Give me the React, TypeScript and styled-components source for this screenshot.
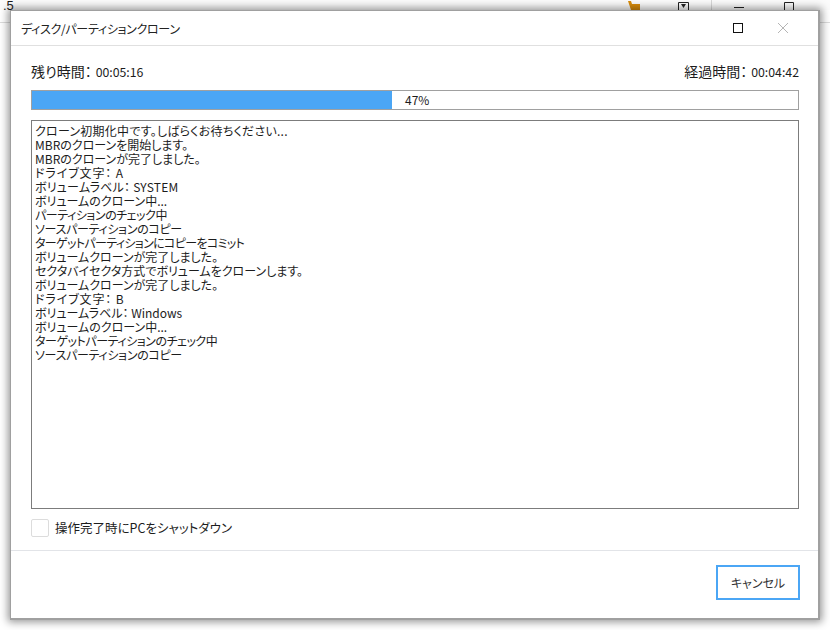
import React from "react";
import styled, { createGlobalStyle } from "styled-components";

const GlobalStyle = createGlobalStyle`
  html, body {
    margin: 0;
    padding: 0;
    background: #ffffff;
  }
  body {
    width: 830px;
    height: 630px;
    overflow: hidden;
    font-family: "Noto Sans CJK JP", "Liberation Sans", sans-serif;
    font-feature-settings: "palt";
    color: #1c1c1c;
  }
`;

const Page = styled.div`
  position: relative;
  width: 830px;
  height: 630px;
  display: flex;
  flex-direction: column;

  /* rule of the app behind the dialog, only its ends show */
  &::before {
    content: "";
    position: absolute;
    left: 0;
    right: 0;
    top: 22px;
    height: 1px;
    background: #dcdcdc;
  }
`;

const BackStrip = styled.div`
  position: relative;
  width: 830px;
  height: 10px;
  flex: none;
  display: flex;
  align-items: flex-start;
  overflow: hidden;
  background: #fbfbfb;

  &::after {
    content: "";
    position: absolute;
    left: 711px;
    top: 0;
    bottom: 0;
    width: 1px;
    background: #d8d8d8;
  }
`;

const BackVersion = styled.span`
  font-family: "Liberation Sans", sans-serif;
  font-size: 13px;
  line-height: 11px;
  margin-left: 3px;
  width: 622px;
  flex: none;
`;

const BackIcon = styled.svg<{ $gap: number }>`
  flex: none;
  margin-left: ${(p) => p.$gap}px;
`;

const Window = styled.div`
  position: relative;
  width: 810px;
  height: 610px;
  margin-left: 10px;
  flex: none;
  box-sizing: border-box;
  background: #ffffff;
  border: 1px solid #a0a0a0;
  border-width: 1px 2px 2px 1px;
  box-shadow: 0 0 8px 2px rgba(0, 0, 0, 0.42);
  display: flex;
  flex-direction: column;
`;

const TitleBar = styled.div`
  height: 34px;
  flex: none;
  display: flex;
  align-items: center;
  padding: 0 29px 0 10px;
  border-bottom: 1px solid #e0e0e0;
`;

const Title = styled.div`
  flex: 1;
  font-size: 12px;
  letter-spacing: -0.3px;
  color: #222222;
`;

const WindowButton = styled.button<{ $gap?: number }>`
  width: 12px;
  height: 12px;
  padding: 0;
  border: none;
  background: none;
  margin-left: ${(p) => p.$gap ?? 0}px;
  display: flex;
`;

const Body = styled.div`
  flex: 1;
  display: flex;
  flex-direction: column;
  padding: 18px 19px 0 20px;
  min-height: 0;
`;

const TimeRow = styled.div`
  display: flex;
  justify-content: space-between;
  font-size: 14px;
  line-height: 15px;
  height: 18px;
`;

const TimeValue = styled.span`
  font-size: 12.3px;
  margin-left: 4px;
`;

const Progress = styled.div`
  position: relative;
  height: 20px;
  margin-top: 8px;
  box-sizing: border-box;
  border: 1px solid #a0a0a0;
  background: #ffffff;
  flex: none;
`;

const ProgressFill = styled.div`
  height: 100%;
  background: #4ba6f5;
`;

const ProgressLabel = styled.span`
  position: absolute;
  left: 373px;
  top: 0;
  font-size: 12px;
  line-height: 17px;
`;

const LogBox = styled.div`
  height: 389px;
  flex: none;
  margin-top: 10px;
  box-sizing: border-box;
  border: 1px solid #7c7c7c;
  padding: 3px 3px;
  font-size: 12px;
  line-height: 14px;
  overflow: hidden;
`;

const LogLine = styled.div<{ $spacing?: number }>`
  white-space: nowrap;
  letter-spacing: ${(p) => p.$spacing ?? 0}px;
`;

const ShutdownRow = styled.label`
  display: flex;
  align-items: center;
  gap: 6px;
  margin-top: 10px;
  font-size: 12.5px;
  line-height: 18px;
`;

const CheckBox = styled.span`
  width: 18px;
  height: 18px;
  box-sizing: border-box;
  border: 1px solid #dcdcdc;
  border-radius: 2px;
  background: #fff;
`;

const Footer = styled.div`
  height: 68px;
  flex: none;
  box-sizing: border-box;
  border-top: 1px solid #e2e4e8;
  display: flex;
  justify-content: flex-end;
  align-items: flex-start;
  padding: 14px 18px 0 0;
`;

const CancelButton = styled.button`
  width: 84px;
  height: 35px;
  box-sizing: border-box;
  border: 2px solid #4ba6f5;
  background: #ffffff;
  font-family: inherit;
  font-feature-settings: inherit;
  font-size: 12px;
  color: #333333;
  padding: 0;
`;

const logLines: { text: string; spacing?: number }[] = [
  { text: "クローン初期化中です。しばらくお待ちください...", spacing: 0.25 },
  { text: "MBRのクローンを開始します。" },
  { text: "MBRのクローンが完了しました。" },
  { text: "ドライブ文字： A", spacing: 0.9 },
  { text: "ボリュームラベル： SYSTEM", spacing: 0.2 },
  { text: "ボリュームのクローン中..." },
  { text: "パーティションのチェック中", spacing: -0.45 },
  { text: "ソースパーティションのコピー", spacing: -0.3 },
  { text: "ターゲットパーティションにコピーをコミット", spacing: -0.65 },
  { text: "ボリュームクローンが完了しました。" },
  { text: "セクタバイセクタ方式でボリュームをクローンします。" },
  { text: "ボリュームクローンが完了しました。" },
  { text: "ドライブ文字： B", spacing: 0.9 },
  { text: "ボリュームラベル： Windows" },
  { text: "ボリュームのクローン中..." },
  { text: "ターゲットパーティションのチェック中", spacing: -0.45 },
  { text: "ソースパーティションのコピー", spacing: -0.3 },
];

export default function App() {
  const percent = 47;
  return (
    <Page>
      <GlobalStyle />
      <BackStrip>
        <BackVersion>.5</BackVersion>
        <BackIcon $gap={3} width="12" height="10" viewBox="0 0 12 10">
          <path d="M0 1h3l1 3h8v6H3z" fill="#d98c0a" />
        </BackIcon>
        <BackIcon $gap={38} width="12" height="10" viewBox="0 0 12 10">
          <path d="M.5 2.5v8h10v-8z" fill="none" stroke="#222" />
          <path d="M3 4h5L5.5 8z" fill="#222" />
        </BackIcon>
        <BackIcon $gap={43} width="12" height="10" viewBox="0 0 12 10">
          <path d="M1 7.5h10" stroke="#222" />
        </BackIcon>
        <BackIcon $gap={39} width="12" height="10" viewBox="0 0 12 10">
          <path d="M.5 10V2.5h9V10" fill="none" stroke="#222" />
        </BackIcon>
      </BackStrip>
      <Window>
        <TitleBar>
          <Title>ディスク/パーティションクローン</Title>
          <WindowButton aria-label="maximize">
            <svg width="12" height="12" viewBox="0 0 12 12">
              <rect x="1.5" y="1.5" width="9" height="9" fill="none" stroke="#111" />
            </svg>
          </WindowButton>
          <WindowButton aria-label="close" $gap={33}>
            <svg width="12" height="12" viewBox="0 0 12 12">
              <path d="M1 1l10 10M11 1L1 11" stroke="#b5b5b5" fill="none" />
            </svg>
          </WindowButton>
        </TitleBar>
        <Body>
          <TimeRow>
            <span>
              残り時間：<TimeValue>00:05:16</TimeValue>
            </span>
            <span>
              経過時間：<TimeValue>00:04:42</TimeValue>
            </span>
          </TimeRow>
          <Progress>
            <ProgressFill style={{ width: `${percent}%` }} />
            <ProgressLabel>{percent}%</ProgressLabel>
          </Progress>
          <LogBox>
            {logLines.map((line, i) => (
              <LogLine key={i} $spacing={line.spacing}>
                {line.text}
              </LogLine>
            ))}
          </LogBox>
          <ShutdownRow>
            <CheckBox />
            操作完了時にPCをシャットダウン
          </ShutdownRow>
        </Body>
        <Footer>
          <CancelButton>キャンセル</CancelButton>
        </Footer>
      </Window>
    </Page>
  );
}
